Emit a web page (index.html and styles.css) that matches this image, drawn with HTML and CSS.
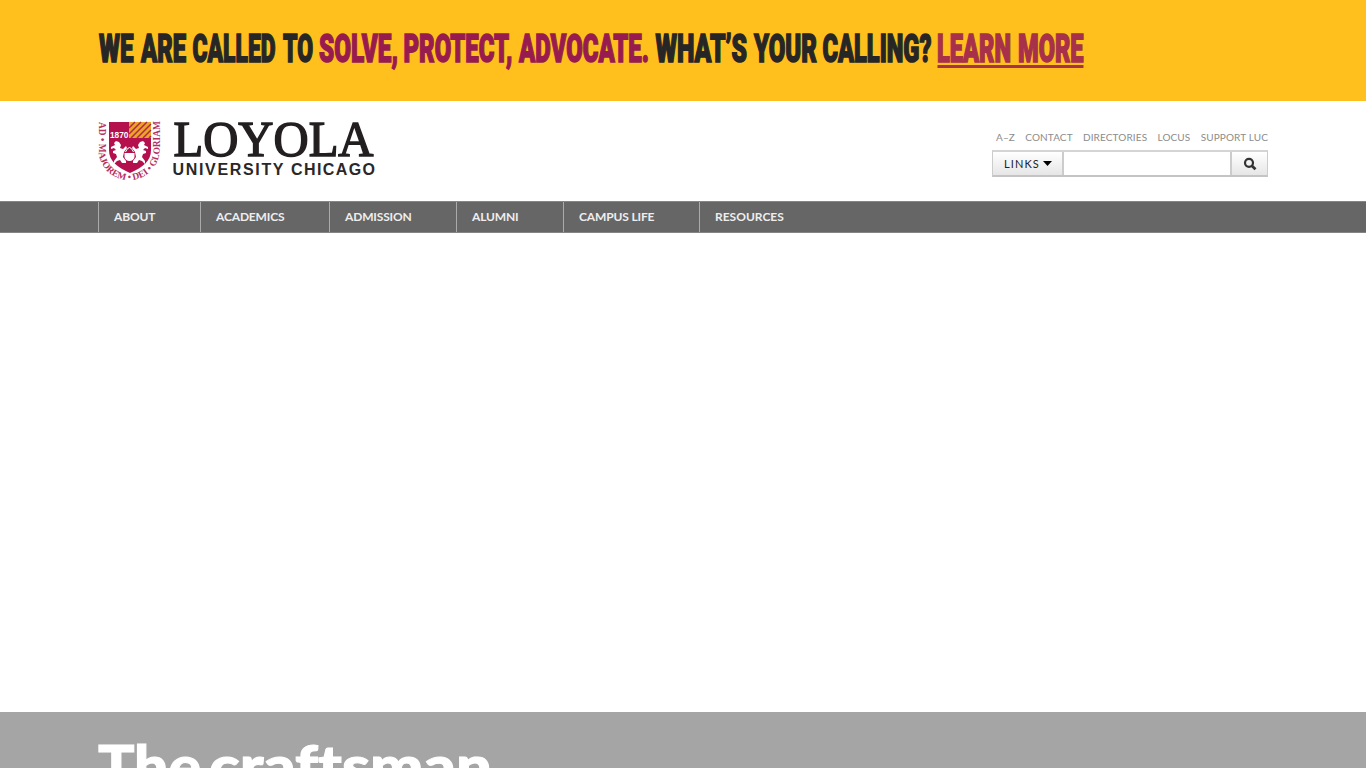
FILE: index.html
```html
<!DOCTYPE html>
<html lang="en">
<head>
<meta charset="utf-8">
<title>Loyola University Chicago</title>
<link rel="stylesheet" href="styles.css">
</head>
<body>
<a class="banner" href="#">
  <svg class="banner-text" width="1170" height="101" viewBox="98 0 1170 101">
    <g>
      <text x="99" y="62" textLength="34.500" lengthAdjust="spacingAndGlyphs">WE</text>
      <text x="141" y="62" textLength="45" lengthAdjust="spacingAndGlyphs">ARE</text>
      <text x="192.500" y="62" textLength="83" lengthAdjust="spacingAndGlyphs">CALLED</text>
      <text x="283" y="62" textLength="30" lengthAdjust="spacingAndGlyphs">TO</text>
    </g>
    <g class="accent">
      <text x="319" y="62" textLength="79" lengthAdjust="spacingAndGlyphs">SOLVE,</text>
      <text x="403.500" y="62" textLength="109" lengthAdjust="spacingAndGlyphs">PROTECT,</text>
      <text x="519" y="62" textLength="130" lengthAdjust="spacingAndGlyphs">ADVOCATE.</text>
    </g>
    <g>
      <text x="655.500" y="62" textLength="91.500" lengthAdjust="spacingAndGlyphs">WHAT’S</text>
      <text x="754" y="62" textLength="63" lengthAdjust="spacingAndGlyphs">YOUR</text>
      <text x="822.500" y="62" textLength="109" lengthAdjust="spacingAndGlyphs">CALLING?</text>
    </g>
    <g class="more">
      <text x="937" y="62" textLength="74" lengthAdjust="spacingAndGlyphs">LEARN</text>
      <text x="1018" y="62" textLength="65.500" lengthAdjust="spacingAndGlyphs">MORE</text>
      <rect x="937.500" y="65" width="146" height="3"/>
    </g>
  </svg>
</a>
<header class="header">
  <svg class="logo" width="280" height="64" viewBox="97 120 280 64">
    <path id="motto" fill="none" d="M98.500 122V149.500A30.600 30.600 0 0 0 159.700 149.500V121"/>
    <text class="motto"><textPath href="#motto" textLength="152" lengthAdjust="spacingAndGlyphs">AD • MAJOREM • DEI • GLORIAM</textPath></text>
    <path fill="#b4104e" d="M109 122H151V150C151 161 143 167 130 173C117 167 109 161 109 150Z"/>
    <path fill="#f0a030" d="M129 122H151V138H129Z"/>
    <path stroke="#a8303a" stroke-width="1.500" d="M129 128L135 122M129 134L141 122M131 138L147 122M137 138L151 124M143 138L151 130M149 138L151 136"/>
    <text class="year" x="110" y="137.500" textLength="18.500" lengthAdjust="spacingAndGlyphs">1870</text>
    <path fill="#fff" d="M116 141l3 1 2 3-1 3 3 1 3-3 1 2-3 4-1 5 3 4v2h-4l-2-3-3 1-3 3v-3l3-4-1-3-3-1v-2l3-1-2-2-3 1v-2l4-2-1-2ZM143 141l-3 1-2 3 1 3-3 1-3-3-1 2 3 4 1 5-3 4v2h4l2-3 3 1 3 3v-3l-3-4 1-3 3-1v-2l-3-1 2-2 3 1v-2l-4-2 1-2Z"/>
    <path fill="#fff" d="M124.500 153h10v4q-1 4-5 4t-5-4Z"/>
    <path fill="none" stroke="#fff" d="M125.500 152q4-9 8 0"/>
    <text class="name" x="173.500" y="156" textLength="200" lengthAdjust="spacingAndGlyphs">LOYOLA</text>
    <text class="sub" x="172.500" y="174.500" textLength="111" lengthAdjust="spacing">UNIVERSITY</text>
    <text class="sub" x="291" y="174.500" textLength="84" lengthAdjust="spacing">CHICAGO</text>
  </svg>
  <div class="tools">
    <nav class="quick">
      <a href="#">A–Z</a><a href="#">CONTACT</a><a href="#">DIRECTORIES</a><a href="#">LOCUS</a><a href="#">SUPPORT LUC</a>
    </nav>
    <form class="search">
      <button class="links" type="button">LINKS<svg width="9" height="5" viewBox="0 0 9 5"><path d="M0 0H9L4.500 5Z"/></svg></button>
      <input class="field" type="text" aria-label="Search">
      <button class="go" type="button" aria-label="Go"><svg width="14" height="14" viewBox="0 0 14 14" fill="none" stroke="#333"><circle cx="6" cy="5.800" r="4" stroke-width="2.200"/><path stroke-width="2.800" d="M8.800 8.800L12.500 12.300"/></svg></button>
    </form>
  </div>
</header>
<nav class="main-nav">
  <a class="about" href="#">ABOUT</a>
  <a class="academics" href="#">ACADEMICS</a>
  <a class="admission" href="#">ADMISSION</a>
  <a class="alumni" href="#">ALUMNI</a>
  <a class="campus" href="#">CAMPUS LIFE</a>
  <a class="resources" href="#">RESOURCES</a>
</nav>
<main class="stage">
  <section class="feature">
    <svg width="500" height="56" viewBox="98 712 500 56">
      <text x="98" y="787" textLength="103" lengthAdjust="spacingAndGlyphs">The</text>
      <text x="209" y="787" textLength="283" lengthAdjust="spacingAndGlyphs">craftsman</text>
    </svg>
  </section>
</main>
</body>
</html>
```

FILE: styles.css
```css
* { box-sizing: border-box; }
body { margin: 0; height: 768px; overflow: hidden; background: #fff; font-family: Lato, sans-serif; display: flex; flex-direction: column; }
a { color: inherit; text-decoration: none; }
svg { display: block; }
.banner { height: 101px; background: #ffbf1c; padding-left: 98px; flex: none; }
.banner-text { font: 900 39.5px Roboto, sans-serif; fill: #262626; stroke: #262626; stroke-width: 1.6px; }
.banner-text .accent { fill: #981b4f; stroke: #981b4f; }
.banner-text .more { fill: #a7304a; stroke: #a7304a; }
.banner-text rect { stroke: none; }
.header { height: 100px; flex: none; display: flex; justify-content: space-between; padding: 19px 98px 0 97px; }
.motto { font: bold 9.5px "Liberation Serif", serif; fill: #b4305f; }
.year { font: bold 8.5px "Liberation Sans", sans-serif; fill: #fff; }
.name { font: 51px "Liberation Serif", serif; fill: #231f20; stroke: #231f20; stroke-width: 1.5px; }
.sub { font: bold 16px "Liberation Sans", sans-serif; fill: #2b2728; }
.tools { width: 276px; padding-top: 11px; }
.quick { display: flex; justify-content: space-between; padding-left: 4px; font-size: 10px; letter-spacing: .13px; line-height: 13px; color: #8c8c8c; white-space: nowrap; }
.search { display: flex; height: 27px; margin: 6px 0 0; border: 1px solid #ccc; border-top: 2px solid #d4d4d4; border-bottom: 2px solid #c4c4c4; }
.search button { padding: 0; border: 0; background: linear-gradient(#fff, #e6e6e6); display: flex; align-items: center; justify-content: center; color: #222; }
.search .links { width: 69px; gap: 3px; padding: 0 0 1px 1px; font: 11px Lato, sans-serif; letter-spacing: 1.1px; }
.field { flex: 1; min-width: 0; border: solid #ccc; border-width: 0 2px; padding: 0 5px; background: #fff; }
.search .go { width: 35px; }
.main-nav { height: 32px; flex: none; background: #666; border-top: 1px solid #858585; border-bottom: 1px solid #858585; padding-left: 98px; display: flex; color: #eee; font-size: 12px; font-weight: 700; letter-spacing: -.15px; line-height: 30px; }
.main-nav a { border-left: 1px solid #aaa; padding-left: 15px; white-space: nowrap; }
.main-nav .resources { letter-spacing: 0; }
.about { width: 102px; }
.academics { width: 129px; }
.admission { width: 127px; }
.alumni { width: 107px; }
.campus { width: 136px; }
.stage { flex: 1; display: flex; flex-direction: column; justify-content: flex-end; }
.feature { height: 56px; padding-left: 98px; background: #a5a5a5; }
.feature text { font: 900 58px Lato, sans-serif; font-variant-ligatures: none; fill: #fff; stroke: #fff; stroke-width: 1px; }
```
